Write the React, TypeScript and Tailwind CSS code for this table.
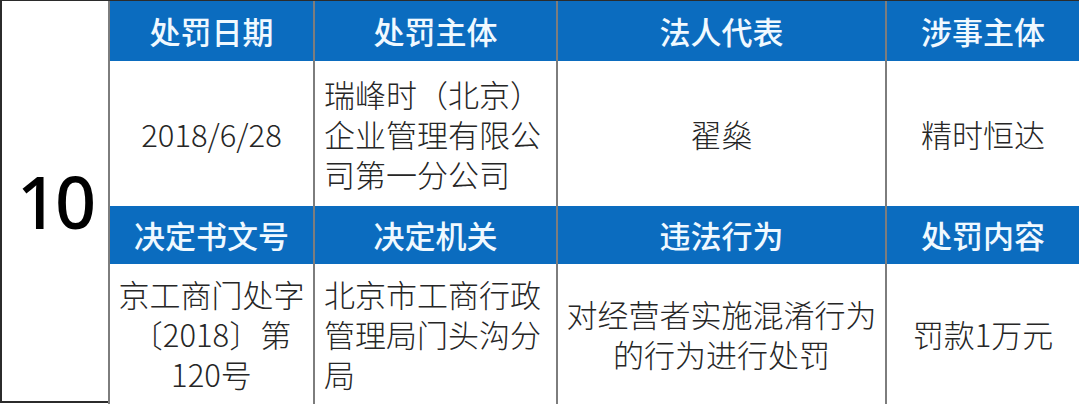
const cjk = { fontFamily: '"Noto Sans CJK SC", "Noto Sans", sans-serif' };

const headerOne = ["处罚日期", "处罚主体", "法人代表", "涉事主体"];
const headerTwo = ["决定书文号", "决定机关", "违法行为", "处罚内容"];

function Head({ text }: { text: string }) {
  return (
    <div className="flex items-center justify-center border-l-2 border-[#7d7d7d] bg-[#0b6cbf] text-[31px] font-medium text-[#f0f9ff]">
      {text}
    </div>
  );
}

function Cell({ lines, align = "center" }: { lines: string[]; align?: "center" | "left" }) {
  return (
    <div
      className={
        align === "left"
          ? "flex flex-col justify-center border-l-2 border-[#7d7d7d] bg-white pl-[9px] text-[31px] font-light leading-[40px] text-[#262626]"
          : "flex flex-col items-center justify-center border-l-2 border-[#7d7d7d] bg-white text-[31px] font-light leading-[40px] text-[#262626]"
      }
    >
      {lines.map((l) => (
        <div key={l} className="whitespace-nowrap">
          {l}
        </div>
      ))}
    </div>
  );
}

export default function App() {
  return (
    <div className="flex h-[405px] w-[1080px] bg-white" style={cjk}>
      <div className="flex h-[403px] w-[108px] items-center justify-center border-t border-b-2 border-l-2 border-[#2b2b2b] bg-white">
        <span
          className="text-[72px] font-medium leading-none tracking-[-3px] text-black"
          style={{ fontFamily: '"Noto Sans", sans-serif' }}
        >
          10
        </span>
      </div>
      <div className="grid h-[403px] w-[971px] grid-cols-[205px_243px_329px_194px] grid-rows-[60px_145px_58px_140px] border-t border-r-2 border-b-2 border-[#2b2b2b]">
        {headerOne.map((h) => (
          <Head key={h} text={h} />
        ))}
        <Cell lines={["2018/6/28"]} />
        <Cell align="left" lines={["瑞峰时（北京）", "企业管理有限公", "司第一分公司"]} />
        <Cell lines={["翟燊"]} />
        <Cell lines={["精时恒达"]} />
        {headerTwo.map((h) => (
          <Head key={h} text={h} />
        ))}
        <Cell lines={["京工商门处字", "〔2018〕第", "120号"]} />
        <Cell align="left" lines={["北京市工商行政", "管理局门头沟分", "局"]} />
        <Cell lines={["对经营者实施混淆行为", "的行为进行处罚"]} />
        <Cell lines={["罚款1万元"]} />
      </div>
    </div>
  );
}
